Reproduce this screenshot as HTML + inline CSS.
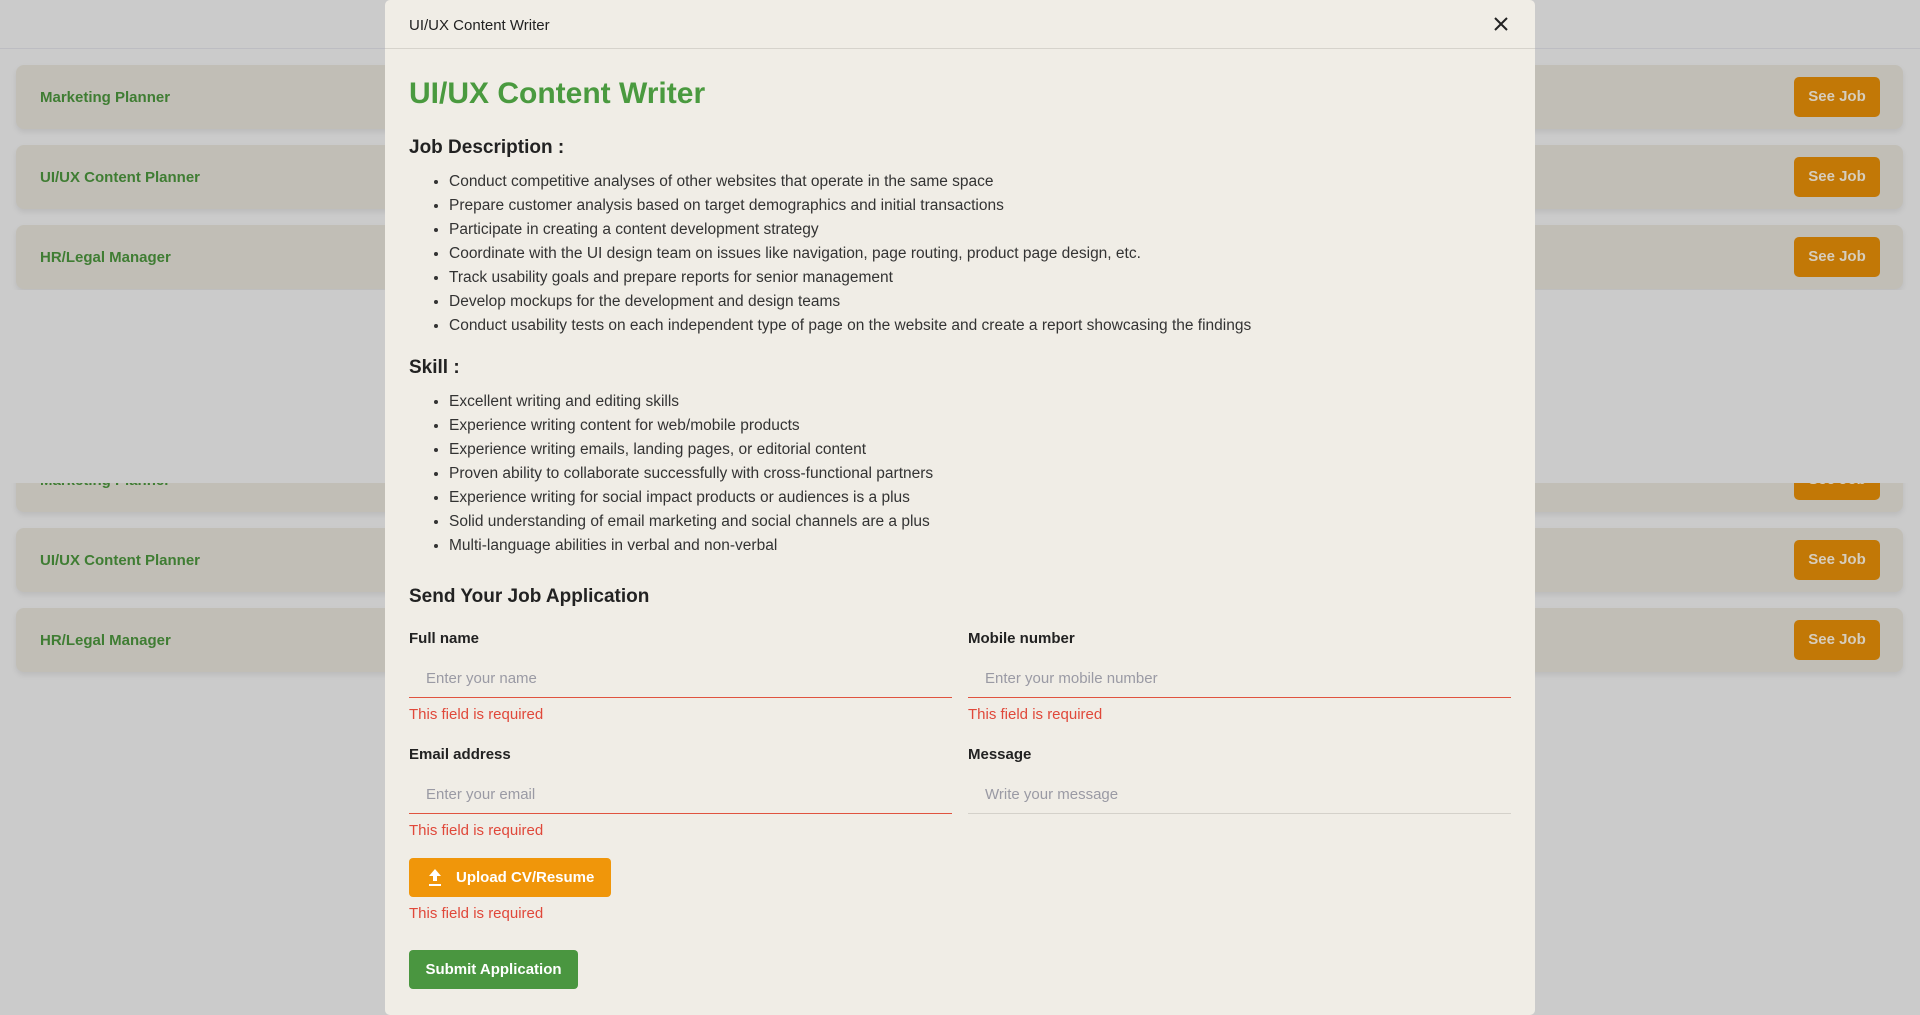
<!DOCTYPE html>
<html><head><meta charset="utf-8"><style>
*{margin:0;padding:0;box-sizing:border-box}
body{width:1920px;height:1015px;background:#cbcbcb;font-family:"Liberation Sans",sans-serif;position:relative;overflow:hidden}
.hl{position:absolute;left:0;right:0;top:48px;height:1px;background:#bdbdc2}
.card{position:absolute;left:16px;width:1887px;height:64px;background:#c1beb6;border-radius:8px;box-shadow:0 3px 6px rgba(0,0,0,.08)}
.card span{position:absolute;left:24px;top:24px;font-size:15px;font-weight:bold;color:#3f7d33}
.card b{position:absolute;left:1778px;top:12px;width:86px;height:40px;background:#c27806;border-radius:5px;color:#d6cdbd;font-size:15px;text-align:center;line-height:40px}
.cover{position:absolute;left:0;right:0;top:290px;height:193px;background:#cbcbcb}
.modal{position:absolute;left:385px;top:0;width:1150px;height:1015px;background:#f0ede6;border-radius:5px}
.mh{height:49px;border-bottom:1px solid #d6d3cc;padding:17px 24px;font-size:15px;color:#222}
.x{position:absolute;right:24px;top:14px}
.a{position:absolute;left:24px}
h1{position:absolute;left:24px;top:77px;font-size:30px;color:#4a9a3f;font-weight:bold}
h2{font-size:19px;font-weight:bold;color:#222}
ul{position:absolute;left:64px;font-size:15.5px;line-height:24px;color:#333}
label{position:absolute;font-size:15px;font-weight:bold;color:#222}
.in{position:absolute;width:543px;height:40px;border-bottom:1px solid #e0533f;font-size:15px;color:#9a9aa4;padding:12px 17px}
.err{position:absolute;font-size:15px;color:#e0483a}
</style></head><body>
<div class="hl"></div>
<div class="card" style="top:65px"><span>Marketing Planner</span><b>See Job</b></div>
<div class="card" style="top:145px"><span>UI/UX Content Planner</span><b>See Job</b></div>
<div class="card" style="top:225px"><span>HR/Legal Manager</span><b>See Job</b></div>
<div class="card" style="top:448px"><span>Marketing Planner</span><b>See Job</b></div>
<div class="cover"></div>
<div class="card" style="top:528px"><span>UI/UX Content Planner</span><b>See Job</b></div>
<div class="card" style="top:608px"><span>HR/Legal Manager</span><b>See Job</b></div>
<div class="modal">
<div class="mh">UI/UX Content Writer</div>
<svg class="x" width="20" height="20" viewBox="0 0 20 20"><path d="M4 4L16 16M16 4L4 16" stroke="#222" stroke-width="2"/></svg>
<h1>UI/UX Content Writer</h1>
<h2 class="a" style="top:137px">Job Description :</h2>
<ul style="top:170px">
<li>Conduct competitive analyses of other websites that operate in the same space</li>
<li>Prepare customer analysis based on target demographics and initial transactions</li>
<li>Participate in creating a content development strategy</li>
<li>Coordinate with the UI design team on issues like navigation, page routing, product page design, etc.</li>
<li>Track usability goals and prepare reports for senior management</li>
<li>Develop mockups for the development and design teams</li>
<li>Conduct usability tests on each independent type of page on the website and create a report showcasing the findings</li>
</ul>
<h2 class="a" style="top:357px">Skill :</h2>
<ul style="top:390px">
<li>Excellent writing and editing skills</li>
<li>Experience writing content for web/mobile products</li>
<li>Experience writing emails, landing pages, or editorial content</li>
<li>Proven ability to collaborate successfully with cross-functional partners</li>
<li>Experience writing for social impact products or audiences is a plus</li>
<li>Solid understanding of email marketing and social channels are a plus</li>
<li>Multi-language abilities in verbal and non-verbal</li>
</ul>
<h2 class="a" style="top:586px">Send Your Job Application</h2>
<label style="left:24px;top:630px">Full name</label>
<label style="left:583px;top:630px">Mobile number</label>
<div class="in" style="left:24px;top:658px">Enter your name</div>
<div class="in" style="left:583px;top:658px">Enter your mobile number</div>
<div class="err" style="left:24px;top:706px">This field is required</div>
<div class="err" style="left:583px;top:706px">This field is required</div>
<label style="left:24px;top:746px">Email address</label>
<label style="left:583px;top:746px">Message</label>
<div class="in" style="left:24px;top:774px">Enter your email</div>
<div class="in" style="left:583px;top:774px;border-bottom-color:#d4d1ca">Write your message</div>
<div class="err" style="left:24px;top:822px">This field is required</div>
<div style="position:absolute;left:24px;top:858px;width:202px;height:39px;background:#f0960a;border-radius:4px;color:#fff;font-weight:bold;font-size:15px;line-height:39px;padding-left:47px">Upload CV/Resume
<svg style="position:absolute;left:19px;top:11px" width="14" height="17" viewBox="0 0 14 17"><path d="M7 0L13 7H9V12H5V7H1Z M1 15H13V17H1Z" fill="#fff"/></svg></div>
<div class="err" style="left:24px;top:905px">This field is required</div>
<div style="position:absolute;left:24px;top:950px;width:169px;height:39px;background:#4a9640;border-radius:4px;color:#fff;font-weight:bold;font-size:15px;line-height:39px;text-align:center">Submit Application</div>
</div>
</body></html>
